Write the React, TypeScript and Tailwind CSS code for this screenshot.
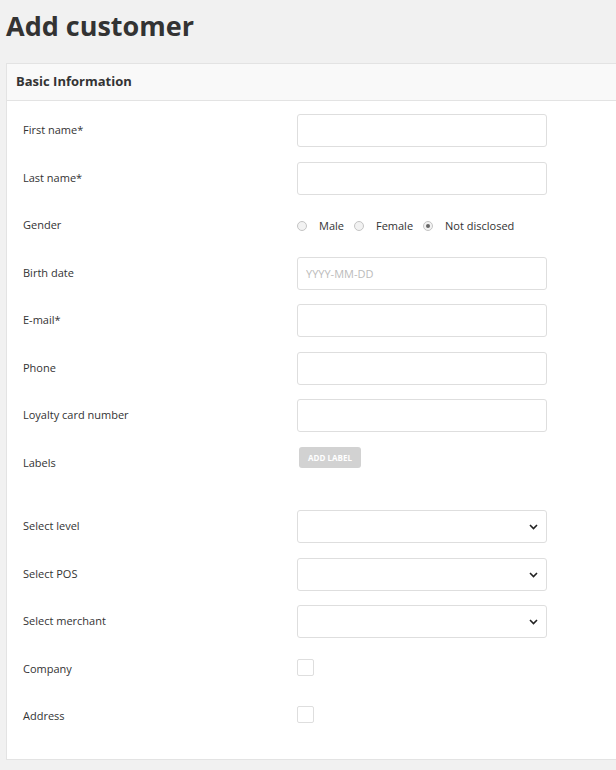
import { useState } from "react";

const font = { fontFamily: '"Open Sans", "Liberation Sans", sans-serif' };

function Label({ children }: { children: React.ReactNode }) {
    return <div className="w-[274px] shrink-0 text-[11px] text-[#333]">{children}</div>;
}

function TextRow({ label, placeholder }: { label: string; placeholder?: string }) {
    return (
        <div className="flex items-center h-[33px]">
            <Label>{label}</Label>
            <input
                type="text"
                placeholder={placeholder}
                className="w-[250px] h-[33px] px-2 border border-[#dedede] rounded-[3px] bg-white text-[11px] text-[#333] placeholder:text-[#bbb] outline-none"
            />
        </div>
    );
}

function SelectRow({ label }: { label: string }) {
    return (
        <div className="flex items-center h-[33px]">
            <Label>{label}</Label>
            <div className="relative w-[250px] h-[33px] border border-[#dedede] rounded-[3px] bg-white">
                <svg
                    className="absolute right-[8px] top-[13px]"
                    width="9"
                    height="6"
                    viewBox="0 0 9 6"
                    fill="none"
                >
                    <path d="M1 1l3.5 3.5L8 1" stroke="#222" strokeWidth="1.6" />
                </svg>
            </div>
        </div>
    );
}

function CheckRow({ label }: { label: string }) {
    return (
        <div className="flex items-center h-[33px]">
            <Label>{label}</Label>
            <span className="block w-[17px] h-[17px] border border-[#dedede] rounded-[2px] bg-white -mt-[4px]" />
        </div>
    );
}

export default function App() {
    const [gender, setGender] = useState("none");

    const options = [
        { value: "male", label: "Male" },
        { value: "female", label: "Female" },
        { value: "none", label: "Not disclosed" },
    ];

    return (
        <div className="w-[616px] h-[770px] overflow-hidden bg-[#f1f1f1] pl-[6px]" style={font}>
            <h1 className="h-[63px] pt-[7px] text-[27px] leading-[38px] font-bold text-[#333]">Add customer</h1>

            <div className="bg-white border border-r-0 border-[#e3e3e3]">
                <div className="h-[37px] flex items-center px-[9px] bg-[#f9f9f9] border-b border-[#e3e3e3]">
                    <h2 className="text-[13px] font-bold text-[#333]">Basic Information</h2>
                </div>

                <div className="pl-[16px] pt-[13px] pb-[26px] flex flex-col gap-[14.5px]">
                    <TextRow label="First name*" />
                    <TextRow label="Last name*" />

                    <div className="flex items-center h-[33px]">
                        <Label>Gender</Label>
                        <div className="flex items-center pt-[1px]">
                            {options.map((o) => (
                                <label
                                    key={o.value}
                                    className="flex items-center mr-[10px] cursor-pointer"
                                    onClick={() => setGender(o.value)}
                                >
                                    <span className="w-[10px] h-[10px] rounded-full border border-[#c4c4c4] bg-[#f2f2f2] flex items-center justify-center mr-[12px]">
                                        {gender === o.value && (
                                            <span className="w-[4px] h-[4px] rounded-full bg-[#666]" />
                                        )}
                                    </span>
                                    <span className="text-[11px] text-[#333]">{o.label}</span>
                                </label>
                            ))}
                        </div>
                    </div>

                    <TextRow label="Birth date" placeholder="YYYY-MM-DD" />
                    <TextRow label="E-mail*" />
                    <TextRow label="Phone" />
                    <TextRow label="Loyalty card number" />

                    <div className="flex items-start h-[49px]">
                        <div className="w-[274px] shrink-0 text-[11px] text-[#333] pt-[8px]">Labels</div>
                        <button className="ml-[2px] mt-[0.5px] h-[21px] w-[62px] rounded-[3px] bg-[#d2d2d2] text-white text-[8px] font-bold uppercase">
                            Add label
                        </button>
                    </div>

                    <SelectRow label="Select level" />
                    <SelectRow label="Select POS" />
                    <SelectRow label="Select merchant" />
                    <CheckRow label="Company" />
                    <CheckRow label="Address" />
                </div>
            </div>
        </div>
    );
}
